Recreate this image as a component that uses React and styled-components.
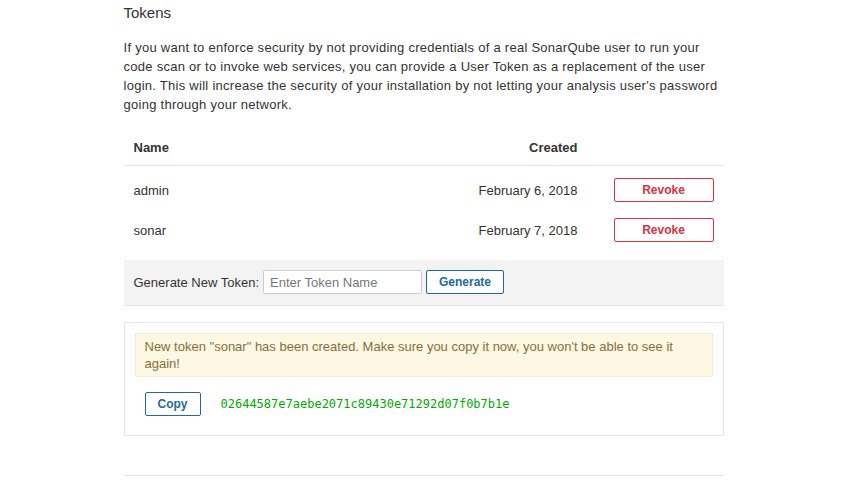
import React from "react";
import styled, { createGlobalStyle } from "styled-components";

const GlobalStyle = createGlobalStyle`
  html, body {
    margin: 0;
    padding: 0;
    background: #fff;
  }
  body {
    font-family: "Liberation Sans", Arial, sans-serif;
    font-size: 13px;
    color: #444;
  }
`;

const Page = styled.div`
  width: 600px;
  margin: 0 auto;
  padding-top: 4px;
`;

const Title = styled.h2`
  margin: 0 0 16px;
  font-size: 15px;
  font-weight: 400;
  line-height: 18px;
  color: #333;
`;

const Intro = styled.p`
  margin: 0 0 20px;
  line-height: 19px;
  letter-spacing: 0.27px;
  color: #333;
`;

const Table = styled.table`
  width: 100%;
  border-collapse: collapse;
  tbody tr:first-child td {
    padding-top: 12px;
  }
`;

const HeadCell = styled.th`
  padding: 6px 10px 9px;
  font-weight: 700;
  text-align: ${(p) => p.align || "left"};
  border-bottom: 1px solid #e6e6e6;
  color: #333;
  line-height: 16px;
`;

const Cell = styled.td`
  padding: 8px 10px;
  height: 24px;
  width: ${(p) => p.width || "auto"};
  text-align: ${(p) => p.align || "left"};
  color: #333;
`;

const Button = styled.button`
  box-sizing: border-box;
  height: 24px;
  padding: 0 12px;
  min-width: ${(p) => p.width || "auto"};
  border: 1px solid ${(p) => (p.danger ? "#d4333f" : "#236a97")};
  border-radius: 2px;
  background: #fff;
  color: ${(p) => (p.danger ? "#d4333f" : "#236a97")};
  font-family: "Liberation Sans", Arial, sans-serif;
  font-size: 12px;
  font-weight: 700;
  line-height: 22px;
  cursor: pointer;
`;

const GenerateForm = styled.form`
  display: flex;
  align-items: center;
  gap: 4px;
  margin-top: 10px;
  padding: 10px 10px 11px;
  background: #f3f3f3;
  border-bottom: 1px solid #e6e6e6;
`;

const Label = styled.label`
  color: #333;
`;

const Input = styled.input`
  box-sizing: border-box;
  width: 159px;
  height: 24px;
  padding: 0 6px;
  border: 1px solid #cdcdcd;
  border-radius: 2px;
  font-family: "Liberation Sans", Arial, sans-serif;
  font-size: 13px;
  color: #333;
  &::placeholder {
    color: #777;
  }
`;

const Card = styled.div`
  margin-top: 16px;
  padding: 10px;
  border: 1px solid #e6e6e6;
`;

const Alert = styled.div`
  padding: 4px 9px;
  line-height: 17px;
  background: #fcf8e3;
  border: 1px solid #faebcc;
  color: #8a6d3b;
`;

const TokenRow = styled.div`
  display: flex;
  align-items: center;
  gap: 20px;
  padding: 15px 10px 9px;
`;

const TokenValue = styled.code`
  font-family: "DejaVu Sans Mono", "Liberation Mono", monospace;
  font-size: 12px;
  color: #00aa00;
`;

const Divider = styled.hr`
  margin: 39px 0 0;
  border: 0;
  border-top: 1px solid #e6e6e6;
`;

const tokens = [
  { name: "admin", created: "February 6, 2018" },
  { name: "sonar", created: "February 7, 2018" },
];

export default function App() {
  return (
    <>
      <GlobalStyle />
      <Page>
        <Title>Tokens</Title>
        <Intro>
          If you want to enforce security by not providing credentials of a real SonarQube user to run your
          code scan or to invoke web services, you can provide a User Token as a replacement of the user
          login. This will increase the security of your installation by not letting your analysis user's
          password going through your network.
        </Intro>
        <Table>
          <thead>
            <tr>
              <HeadCell>Name</HeadCell>
              <HeadCell align="right">Created</HeadCell>
              <HeadCell />
            </tr>
          </thead>
          <tbody>
            {tokens.map((t) => (
              <tr key={t.name}>
                <Cell>{t.name}</Cell>
                <Cell align="right">{t.created}</Cell>
                <Cell align="right" width="116px">
                  <Button danger width="100px" type="button">
                    Revoke
                  </Button>
                </Cell>
              </tr>
            ))}
          </tbody>
        </Table>
        <GenerateForm onSubmit={(e) => e.preventDefault()}>
          <Label>Generate New Token:</Label>
          <Input placeholder="Enter Token Name" />
          <Button type="submit">Generate</Button>
        </GenerateForm>
        <Card>
          <Alert>
            New token "sonar" has been created. Make sure you copy it now, you won't be able to see it
            again!
          </Alert>
          <TokenRow>
            <Button type="button">Copy</Button>
            <TokenValue>02644587e7aebe2071c89430e71292d07f0b7b1e</TokenValue>
          </TokenRow>
        </Card>
        <Divider />
      </Page>
    </>
  );
}
